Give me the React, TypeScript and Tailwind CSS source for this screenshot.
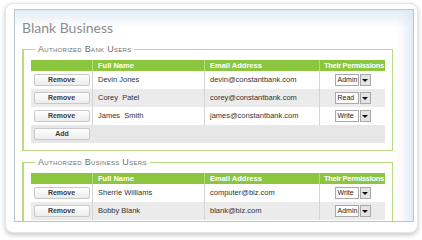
import React from "react";

type User = { name: string; email: string; role: string };

const bankUsers: User[] = [
  { name: "Devin Jones", email: "devin@constantbank.com", role: "Admin" },
  { name: "Corey  Patel", email: "corey@constantbank.com", role: "Read" },
  { name: "James  Smith", email: "james@constantbank.com", role: "Write" },
];

const businessUsers: User[] = [
  { name: "Sherrie Williams", email: "computer@biz.com", role: "Write" },
  { name: "Bobby Blank", email: "blank@biz.com", role: "Admin" },
];

const SmallButton: React.FC<{ label: string }> = ({ label }) => (
  <button className="w-[56px] h-[12px] rounded-[2px] border border-[#c9c9c9] bg-[linear-gradient(to_bottom,#ffffff,#ececec)] text-[7px] leading-[10px] font-bold text-[#3a3a3a]">
    {label}
  </button>
);

const RoleSelect: React.FC<{ value: string }> = ({ value }) => (
  <div className="flex h-[12px] w-[36px]">
    <div className="flex-1 overflow-hidden whitespace-nowrap border border-[#a9a9a9] bg-white pl-[2px] text-[7px] leading-[10px] text-[#222]">
      {value}
    </div>
    <div className="ml-[1px] flex w-[11px] items-center justify-center border border-[#a9a9a9] bg-[#e4e4e4]">
      <div className="h-0 w-0 border-x-[3px] border-t-[3px] border-x-transparent border-t-[#111]" />
    </div>
  </div>
);

const cols = "grid grid-cols-[62px_112px_115px_65px]";

const UserTable: React.FC<{ users: User[]; withAdd?: boolean }> = ({
  users,
  withAdd = false,
}) => (
  <div className="w-[354px] text-[7.5px] text-[#333]">
    <div className={`${cols} h-[11px] bg-[#8cc63f] font-bold text-white leading-[11px]`}>
      <div className="border-r border-[#b5dc7c]" />
      <div className="border-r border-[#b5dc7c] pl-[5px]">Full Name</div>
      <div className="border-r border-[#b5dc7c] pl-[5px]">Email Address</div>
      <div className="overflow-hidden whitespace-nowrap pl-[4px] tracking-[-0.3px]">Their Permissions</div>
    </div>
    {users.map((u, i) => (
      <div
        key={u.email}
        className={`${cols} h-[18px] ${i % 2 === 1 ? "bg-[#ebebeb]" : "bg-white"}`}
      >
        <div className="flex items-center justify-center border-r border-[#d4d4d4]">
          <SmallButton label="Remove" />
        </div>
        <div className="flex items-center whitespace-pre border-r border-[#d4d4d4] pl-[5px]">
          {u.name}
        </div>
        <div className="flex items-center border-r border-[#d4d4d4] pl-[5px]">
          {u.email}
        </div>
        <div className="flex items-center justify-center">
          <RoleSelect value={u.role} />
        </div>
      </div>
    ))}
    {withAdd && (
      <div className="flex h-[18px] items-center bg-[#e7e7e7] pl-[3px]">
        <SmallButton label="Add" />
      </div>
    )}
  </div>
);

const Section: React.FC<{ title: string; children: React.ReactNode; className?: string }> = ({
  title,
  children,
  className = "",
}) => (
  <fieldset
    className={`ml-[7px] w-[371px] border border-l-2 border-[#b6db80] pl-[7px] pt-[6px] pb-[7px] ${className}`}
  >
    <legend className="ml-[4px] px-[3px] text-[9px] leading-[10px] tracking-[0.3px] text-[#6f6f6f] [font-variant:small-caps]">
      {title}
    </legend>
    {children}
  </fieldset>
);

export default function App() {
  return (
    <div className="h-[240px] w-[422px] overflow-hidden bg-white pl-[5px] pt-[3px] font-['Liberation_Sans',Arial,sans-serif]">
      <div className="h-[230px] w-[413px] rounded-[8px] border border-[#e6e6e6] bg-white pl-[8px] pt-[5px] shadow-[0_2px_5px_rgba(0,0,0,0.22)]">
        <div className="h-[213px] w-[400px] overflow-hidden border border-[#b9c6d1] bg-[linear-gradient(to_bottom,#e2ebf4,#ffffff_18px)] shadow-[inset_-14px_0_12px_-8px_#dde8f3]">
          <div className="pl-[7px] pt-[10px] font-['Lato',sans-serif] text-[14px] leading-[16px] text-[#8c8c8c]">
            Blank Business
          </div>
          <Section title="Authorized Bank Users" className="mt-[8px]">
            <UserTable users={bankUsers} withAdd />
          </Section>
          <Section title="Authorized Business Users" className="mt-[6px]">
            <UserTable users={businessUsers} />
          </Section>
        </div>
      </div>
    </div>
  );
}
